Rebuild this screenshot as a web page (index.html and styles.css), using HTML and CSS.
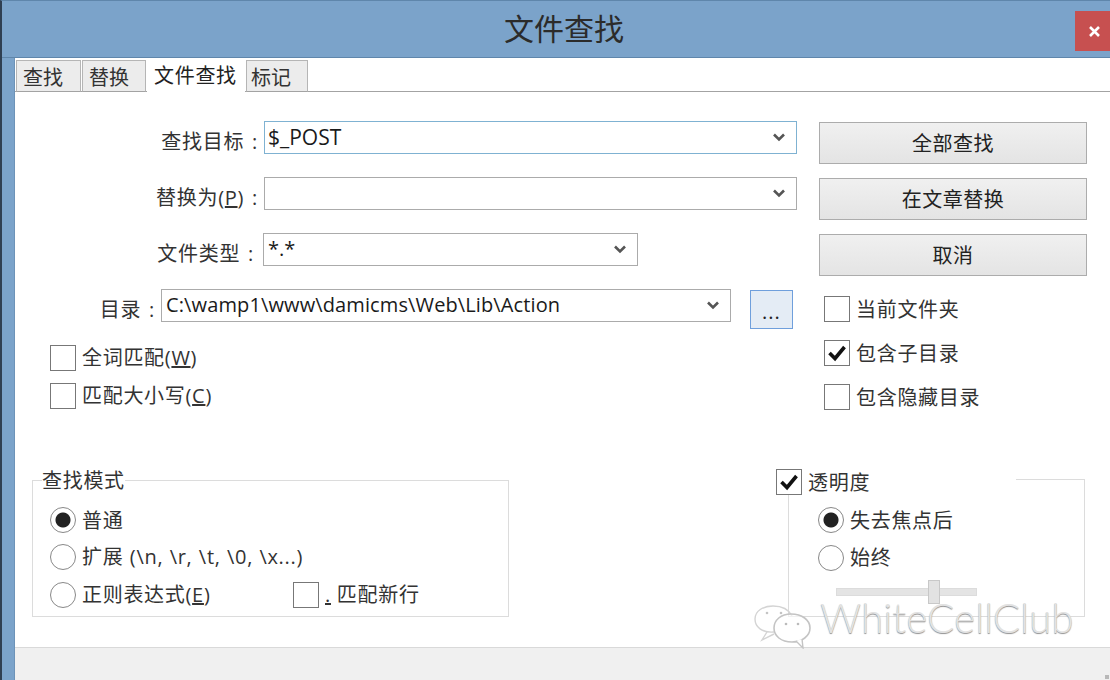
FILE: index.html
```html
<!DOCTYPE html>
<html lang="zh-CN">
<head>
    <meta charset="UTF-8">
    <title>文件查找</title>
    <link rel="stylesheet" href="styles.css">
</head>
<body>
    <div class="window">
        <header class="titlebar">
            <h1 class="title">文件查找</h1>
            <div class="close">
                <svg width="11" height="11" viewBox="0 0 11 11"><path d="M1 1 L10 10 M10 1 L1 10" stroke="#fff" stroke-width="2.6"/></svg>
            </div>
        </header>

        <div class="panel">
            <nav class="tabs">
                <div class="tab tab-find">查找</div>
                <div class="tab tab-replace">替换</div>
                <div class="tab tab-files active">文件查找</div>
                <div class="tab tab-mark">标记</div>
            </nav>

            <main class="content">
                <div class="top">
                    <div class="form">
                        <div class="field">
                            <label class="field-label">查找目标 :</label>
                            <div class="combo combo-wide focused">
                                <span class="search-text">$_POST</span>
                                <svg class="chevron" width="12" height="9" viewBox="0 0 12 9"><path d="M1 1.5 L6 6.5 L11 1.5" fill="none" stroke="#555" stroke-width="2.6"/></svg>
                            </div>
                        </div>
                        <div class="field">
                            <label class="field-label">替换为(<u>P</u>) :</label>
                            <div class="combo combo-wide">
                                <span></span>
                                <svg class="chevron" width="12" height="9" viewBox="0 0 12 9"><path d="M1 1.5 L6 6.5 L11 1.5" fill="none" stroke="#555" stroke-width="2.6"/></svg>
                            </div>
                        </div>
                        <div class="field">
                            <label class="field-label label-type">文件类型 :</label>
                            <div class="combo combo-type">
                                <span>*.*</span>
                                <svg class="chevron" width="12" height="9" viewBox="0 0 12 9"><path d="M1 1.5 L6 6.5 L11 1.5" fill="none" stroke="#555" stroke-width="2.6"/></svg>
                            </div>
                        </div>
                        <div class="field field-dir">
                            <label class="field-label label-dir">目录 :</label>
                            <div class="combo combo-dir">
                                <span class="path-text">C:\wamp1\www\damicms\Web\Lib\Action</span>
                                <svg class="chevron" width="12" height="9" viewBox="0 0 12 9"><path d="M1 1.5 L6 6.5 L11 1.5" fill="none" stroke="#555" stroke-width="2.6"/></svg>
                            </div>
                            <button class="browse">...</button>
                        </div>
                        <div class="options">
                            <div class="option"><span class="box"></span><span>全词匹配(<u>W</u>)</span></div>
                            <div class="option"><span class="box"></span><span>匹配大小写(<u>C</u>)</span></div>
                        </div>
                    </div>

                    <div class="actions">
                        <button class="btn">全部查找</button>
                        <button class="btn">在文章替换</button>
                        <button class="btn">取消</button>
                        <div class="dir-options">
                            <div class="option"><span class="box"></span><span class="opt-text">当前文件夹</span></div>
                            <div class="option">
                                <span class="box">
                                    <svg width="20" height="18" viewBox="0 0 20 18"><path d="M2.5 9 L8 14.5 L17.5 3" fill="none" stroke="#111" stroke-width="3.6"/></svg>
                                </span><span class="opt-text">包含子目录</span>
                            </div>
                            <div class="option"><span class="box"></span><span class="opt-text">包含隐藏目录</span></div>
                        </div>
                    </div>
                </div>

                <div class="groups">
                    <fieldset class="group group-mode">
                        <legend class="legend-mode">查找模式</legend>
                        <div class="radio-row"><span class="radio checked"></span><span class="opt-text">普通</span></div>
                        <div class="radio-row"><span class="radio"></span><span class="mode-ext">扩展 (\n, \r, \t, \0, \x...)</span></div>
                        <div class="radio-row">
                            <span class="radio"></span>
                            <span class="regex-label">正则表达式(<u>E</u>)</span>
                            <span class="box"></span>
                            <span><u>.</u> 匹配新行</span>
                        </div>
                    </fieldset>

                    <fieldset class="group group-alpha">
                        <legend class="legend-alpha">
                            <span class="box">
                                <svg width="20" height="18" viewBox="0 0 20 18"><path d="M2.5 9 L8 14.5 L17.5 3" fill="none" stroke="#111" stroke-width="3.6"/></svg>
                            </span><span>透明度</span>
                        </legend>
                        <div class="radio-row"><span class="radio checked"></span><span class="opt-text">失去焦点后</span></div>
                        <div class="radio-row"><span class="radio"></span><span>始终</span></div>
                        <div class="slider"><span class="thumb"></span></div>
                    </fieldset>
                </div>
            </main>

            <footer class="statusbar"><span class="grip"></span></footer>
        </div>

        <!-- 水印 -->
        <div class="watermark">
            <svg width="58" height="44" viewBox="0 0 58 44">
                <path d="M20 27 C8 28 1 22 1 14 C1 6 9 1 19 1 C28 1 35 5 38 11" fill="none" stroke="#d4d4d4" stroke-width="1.4"/>
                <path d="M13 27 L8 35 L20 29" fill="none" stroke="#d4d4d4" stroke-width="1.4"/>
                <path d="M37 9 C48 9 56 15 56 23 C56 31 48 37 38 37 C27 37 20 31 20 23 C20 15 27 9 37 9 Z" fill="#fff" fill-opacity="0.6" stroke="#c4c4c4" stroke-width="1.6"/>
                <path d="M42 36 L49 43 L48 34" fill="#fff" stroke="#c4c4c4" stroke-width="1.4"/>
                <circle cx="13" cy="8" r="1.3" fill="#c4c4c4"/>
                <circle cx="27" cy="8" r="1.3" fill="#c4c4c4"/>
                <circle cx="32" cy="19" r="1.3" fill="#bbb"/>
                <circle cx="44" cy="19" r="1.3" fill="#bbb"/>
            </svg>
            <span class="watermark-text">WhiteCellClub</span>
        </div>
    </div>
</body>
</html>
```
FILE: styles.css
```css
* {
    box-sizing: border-box;
}
body {
    margin: 0;
    font-family: "Open Sans", "Noto Sans CJK SC", sans-serif;
    font-size: 20px;
    color: #222;
}
.window {
    position: relative;
    width: 1110px;
    height: 680px;
    overflow: hidden;
    display: flex;
    flex-direction: column;
    background: #7ba3ca;
    border-top: 1px solid #5f86ab;
    border-left: 2px solid #2f3f52;
}
.titlebar {
    height: 57px;
    display: flex;
    align-items: flex-start;
    border-bottom: 1px solid #5f86ab;
}
.title {
    flex: 1;
    margin: 0;
    padding: 8px 0 0 51px;
    text-align: center;
    font-size: 30px;
    line-height: 40px;
    font-weight: 400;
    color: #2b2b2b;
}
.close {
    width: 35px;
    height: 40px;
    margin-top: 10px;
    display: flex;
    align-items: center;
    justify-content: center;
    padding-left: 3px;
    background: #c75050;
}
.panel {
    flex: 1;
    margin-left: 12px;
    display: flex;
    flex-direction: column;
    background: #fff;
    border-left: 1px solid #6d93b8;
}

/* tabs */
.tabs {
    height: 34px;
    display: flex;
    align-items: flex-end;
    gap: 1px;
    padding-left: 1px;
    border-bottom: 1px solid #a3a3a3;
}
.tab {
    height: 32px;
    margin-bottom: -1px;
    padding-left: 6px;
    line-height: 33px;
    background: #ececec;
    border: 1px solid #b5b5b5;
    border-bottom: 1px solid #a3a3a3;
    color: #333;
}
.tab-find {
    width: 65px;
}
.tab-replace {
    width: 64px;
    margin-left: 0;
}
.tab-files {
    width: 98px;
}
.tab-mark {
    width: 62px;
    padding-left: 4px;
}
.tab.active {
    height: 34px;
    padding-left: 6px;
    line-height: 34px;
    letter-spacing: 0.7px;
    background: #fff;
    border-color: #fff;
    border-bottom-color: #fff;
    color: #222;
}

/* main area */
.content {
    flex: 1;
    display: flex;
    flex-direction: column;
    justify-content: space-between;
}
.top {
    display: flex;
    padding-top: 29px;
}
.form {
    width: 804px;
}
.field {
    height: 33px;
    margin-bottom: 23px;
    display: flex;
    align-items: flex-start;
    gap: 6px;
}
.field-label {
    width: 243px;
    text-align: right;
    line-height: 42px;
    letter-spacing: 0.7px;
    word-spacing: 2px;
    color: #333;
}
.label-type {
    width: 242px;
    padding-right: 3px;
}
.label-dir {
    width: 140px;
}
.combo {
    height: 33px;
    display: flex;
    align-items: center;
    justify-content: space-between;
    padding: 0 11px 0 4px;
    border: 1px solid #ababab;
    background: #fff;
    color: #1a1a1a;
    line-height: 28px;
}
.combo span {
    position: relative;
    top: -1px;
}
.search-text {
    margin-left: -1px;
    font-size: 21px;
}
.path-text {
    letter-spacing: 0.12px;
}
.combo-wide {
    width: 533px;
}
.combo-type {
    width: 375px;
}
.combo-dir {
    width: 570px;
}
.focused {
    border-color: #7fb2d2;
}
.browse {
    width: 43px;
    height: 39px;
    margin: 1px 0 0 13px;
    padding: 4px 0 0;
    border: 1px solid #6f9fdc;
    background: #e4ecf5;
    font: inherit;
    letter-spacing: 1px;
    color: #222;
}
.options {
    margin: 20px 0 0 35px;
    display: flex;
    flex-direction: column;
    gap: 12px;
}
.option {
    height: 26px;
    display: flex;
    align-items: center;
    gap: 6px;
    line-height: 26px;
    letter-spacing: 0.7px;
    color: #333;
}
.opt-text {
    padding-top: 2px;
}
.box {
    width: 26px;
    height: 26px;
    flex: none;
    display: flex;
    align-items: center;
    justify-content: center;
    border: 1px solid #777;
    background: #fff;
}
.actions {
    width: 268px;
    display: flex;
    flex-direction: column;
    gap: 14px;
    padding-top: 1px;
}
.btn {
    height: 42px;
    padding: 0 0 2px;
    border: 1px solid #acacac;
    background: linear-gradient(#f0f0f0, #e4e4e4);
    font: inherit;
    letter-spacing: 0.5px;
    color: #222;
}
.dir-options {
    margin: 6px 0 0 5px;
    display: flex;
    flex-direction: column;
    gap: 18px;
}

/* group boxes */
.groups {
    display: flex;
    justify-content: space-between;
    padding: 0 25px 30px 17px;
}
.group {
    margin: 0;
    padding: 0;
    height: 148px;
    border: 1px solid #dcdcdc;
}
.group-mode {
    width: 477px;
    padding-left: 17px;
}
.group-alpha {
    width: 297px;
    padding-left: 29px;
}
.legend-mode {
    height: 22px;
    margin-left: -8px;
    padding: 0;
    line-height: 24px;
    letter-spacing: 0.7px;
    background: #fff;
    color: #333;
}
.legend-alpha {
    width: 240px;
    height: 20px;
    margin-left: -42px;
    padding: 0;
    display: flex;
    align-items: flex-start;
    gap: 6px;
    line-height: 28px;
    letter-spacing: 0.7px;
    background: #fff;
    color: #333;
}
.group-mode .radio-row:first-of-type {
    margin-top: 16px;
    margin-bottom: 11px;
}
.group-alpha .radio-row:first-of-type {
    margin-top: 18px;
}
.radio-row {
    height: 26px;
    margin-bottom: 12px;
    display: flex;
    align-items: center;
    gap: 6px;
    line-height: 28px;
    letter-spacing: 0.7px;
    color: #333;
}
.mode-ext {
    word-spacing: 0.5px;
}
.radio {
    width: 26px;
    height: 26px;
    flex: none;
    border: 1px solid #888;
    border-radius: 50%;
    background: #fff;
}
.radio.checked {
    background: radial-gradient(circle, #222 0, #222 7px, #fff 8px);
}
.regex-label {
    width: 205px;
}
.slider {
    position: relative;
    width: 141px;
    height: 8px;
    margin: 17px 0 0 18px;
    background: #e4e4e4;
    border: 1px solid #dcdcdc;
}
.thumb {
    position: absolute;
    left: 91px;
    top: -9px;
    width: 12px;
    height: 24px;
    background: #e2e2e2;
    border: 1px solid #c8c8c8;
}

.statusbar {
    height: 33px;
    flex: none;
    display: flex;
    justify-content: flex-end;
    align-items: flex-end;
    background: #f0f0f0;
    border-top: 1px solid #d9d9d9;
}
.grip {
    width: 4px;
    height: 4px;
    margin: 0 1px 1px 0;
    background: #b8b8b8;
}

/* watermark lies over the dialog */
.watermark {
    position: absolute;
    left: 752px;
    top: 604px;
    display: flex;
    align-items: flex-start;
    gap: 8px;
}
.watermark-text {
    margin-top: -5px;
    font-family: "Lato", sans-serif;
    font-weight: 300;
    font-size: 40.5px;
    line-height: 36px;
    color: #e2e2e2;
    text-shadow: 0 1px 1px #909090;
}
```
